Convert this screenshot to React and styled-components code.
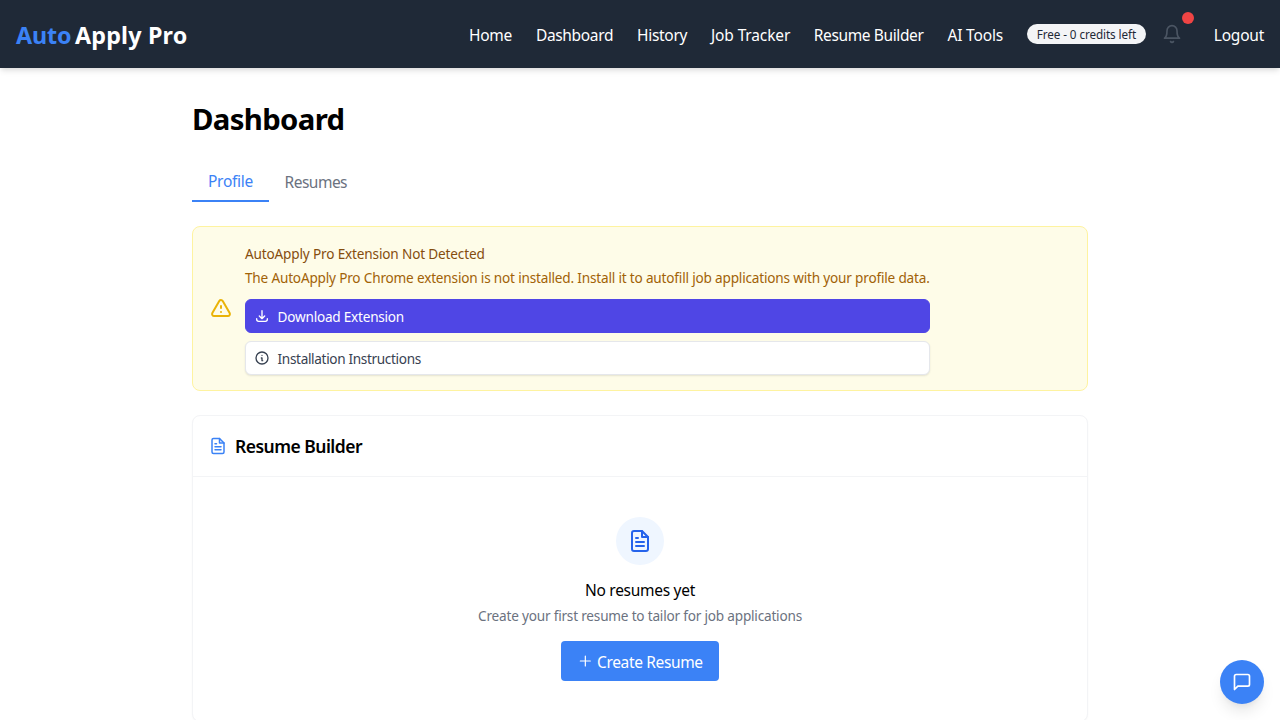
import React from "react";
import styled, { createGlobalStyle, css } from "styled-components";

const GlobalStyle = createGlobalStyle`
  *, *::before, *::after { box-sizing: border-box; }
  html { overflow: hidden; }
  body {
    margin: 0;
    background: #fff;
    color: #000;
    font-family: "Noto Sans", "Open Sans", sans-serif;
  }
  h1, h2, h3, p { margin: 0; }
  button { font: inherit; cursor: pointer; }
  svg { display: block; flex: none; }
`;

const type = (size, line, track = 0, weight = 400) => css`
  font-size: ${size}px;
  line-height: ${line}px;
  letter-spacing: ${track}px;
  font-weight: ${weight};
  white-space: nowrap;
`;

const Header = styled.header`
  display: flex;
  align-items: center;
  justify-content: space-between;
  height: 68px;
  padding: 0 16px;
  background: #1f2937;
  color: #fff;
  box-shadow: 0 4px 6px -1px rgba(0, 0, 0, 0.1), 0 2px 4px -1px rgba(0, 0, 0, 0.06);
`;

const Logo = styled.div`
  display: flex;
  gap: 4px;
  padding-top: 2px;
  ${type(23.3, 32, 0.18, 700)}
`;

const LogoAccent = styled.span`
  width: 55px;
  letter-spacing: -0.15px;
  color: #3b82f6;
`;

const Nav = styled.nav`
  display: flex;
  align-items: center;
  gap: 24px;
`;

const NavLink = styled.a`
  width: ${(p) => p.$width}px;
  padding-top: 2px;
  ${(p) => type(15.5, 24, p.$track)}
`;

const Account = styled.div`
  display: flex;
  align-items: center;
  gap: 8px;
`;

const Credits = styled.span`
  width: 119px;
  height: 20px;
  padding-left: 10px;
  border-radius: 10px;
  background: #f3f4f6;
  color: #1f2937;
  ${type(11.7, 20, -0.09)}
`;

const BellButton = styled.button`
  position: relative;
  padding: 8px;
  border: 0;
  background: none;
  color: #4b5563;
`;

const UnreadDot = styled.span`
  position: absolute;
  top: -4px;
  right: -4px;
  width: 12px;
  height: 12px;
  border-radius: 50%;
  background: #ef4444;
`;

const Main = styled.main`
  width: 896px;
  margin: 0 auto;
  padding: 32px 0;
`;

const PageTitle = styled.h1`
  ${type(29.3, 38, -0.63, 700)}
  height: 36px;
`;

const Tabs = styled.div`
  display: flex;
  align-items: center;
  height: 42px;
  margin: 24px 0;
`;

const Tab = styled.button`
  height: ${(p) => (p.$active ? 42 : 40)}px;
  width: ${(p) => p.$width}px;
  padding: 2px 0 0 ${(p) => (p.$active ? 16 : 15.5)}px;
  border: 0;
  border-bottom: ${(p) => (p.$active ? "2px solid #3b82f6" : "0")};
  background: none;
  text-align: left;
  color: ${(p) => (p.$active ? "#3b82f6" : "#6b7280")};
  && { ${(p) => type(15.5, 24, p.$track)} }
`;

const Alert = styled.section`
  display: flex;
  align-items: center;
  gap: 12px;
  height: 165px;
  padding: 0 16px;
  border: 1px solid #fef3a0;
  border-radius: 8px;
  background: #fefce8;
  color: #eab308;
`;

const AlertBody = styled.div`
  display: flex;
  flex-direction: column;
  width: 685px;
`;

const AlertTitle = styled.h3`
  color: #854d0e;
  ${type(13.6, 24, -0.16)}
`;

const AlertText = styled.p`
  color: #a16207;
  ${type(13.6, 24, -0.185)}
`;

const AlertButton = styled.button`
  display: flex;
  align-items: center;
  gap: 8px;
  height: 34px;
  margin-bottom: ${(p) => (p.$primary ? 8 : 0)}px;
  padding: 0 7.6px;
  border: 1px solid ${(p) => (p.$primary ? "#4f46e5" : "#e5e7eb")};
  border-radius: 6px;
  background: ${(p) => (p.$primary ? "#4f46e5" : "#fff")};
  color: ${(p) => (p.$primary ? "#fff" : "#374151")};
  box-shadow: ${(p) => (p.$primary ? "none" : "0 1px 2px rgba(0, 0, 0, 0.1)")};
`;

const AlertCopy = styled.div`
  height: 56px;
  margin-top: -1px;
  margin-bottom: 1px;
`;

const AlertButtonLabel = styled.span`
  padding-top: 2px;
  ${(p) => type(13.6, 20, p.$track)}
`;

const Card = styled.section`
  margin-top: 24px;
  border: 1px solid #f3f4f6;
  border-radius: 8px;
  background: #fff;
  box-shadow: 0 1px 2px rgba(0, 0, 0, 0.03);
`;

const CardHeader = styled.div`
  display: flex;
  align-items: center;
  gap: 8px;
  height: 61px;
  padding: 0 16px;
  border-bottom: 1px solid #f3f4f6;
  color: #3b82f6;
`;

const CardTitle = styled.h2`
  color: #000;
  ${type(17.5, 28, -0.52, 600)}
`;

const EmptyState = styled.div`
  display: flex;
  flex-direction: column;
  align-items: center;
  padding: 40px 16px;
`;

const EmptyIcon = styled.div`
  display: grid;
  place-items: center;
  width: 48px;
  height: 48px;
  margin-bottom: 13px;
  border-radius: 50%;
  background: #eff6ff;
  color: #2563eb;
`;

const EmptyTitle = styled.h3`
  ${type(15.5, 24, -0.29)}
`;

const EmptyText = styled.p`
  margin: 4px 0 15px;
  color: #6b7280;
  ${type(13.6, 20, -0.2)}
`;

const CreateButton = styled.button`
  display: flex;
  align-items: center;
  gap: 4px;
  width: 158px;
  height: 40px;
  padding: 0 16px;
  border: 0;
  border-radius: 4px;
  background: #3b82f6;
  color: #fff;
`;

const CreateLabel = styled.span`
  padding-top: 2px;
  ${type(15.5, 24, -0.35)}
`;

const ChatButton = styled.button`
  position: fixed;
  right: 16px;
  bottom: 16px;
  display: grid;
  place-items: center;
  width: 44px;
  height: 44px;
  padding: 0;
  border: 0;
  border-radius: 50%;
  background: #3b82f6;
  color: #fff;
  box-shadow: 0 10px 15px -3px rgba(0, 0, 0, 0.1), 0 4px 6px -2px rgba(0, 0, 0, 0.05);
`;

const Icon = ({ size, children }) => (
  <svg
    width={size}
    height={size}
    viewBox="0 0 24 24"
    fill="none"
    stroke="currentColor"
    strokeWidth="2"
    strokeLinecap="round"
    strokeLinejoin="round"
    aria-hidden="true"
  >
    {children}
  </svg>
);

const BellIcon = () => (
  <Icon size={20}>
    <path d="M18 8A6 6 0 0 0 6 8c0 7-3 9-3 9h18s-3-2-3-9" />
    <path d="M13.73 21a2 2 0 0 1-3.46 0" />
  </Icon>
);

const WarningIcon = () => (
  <Icon size={24}>
    <path d="M12 9v2m0 4h.01m-6.938 4h13.856c1.54 0 2.502-1.667 1.732-3L13.732 4c-.77-1.333-2.694-1.333-3.464 0L3.34 16c-.77 1.333.192 3 1.732 3z" />
  </Icon>
);

const DownloadIcon = () => (
  <Icon size={16}>
    <path d="M4 16v1a3 3 0 003 3h10a3 3 0 003-3v-1m-4-4l-4 4m0 0l-4-4m4 4V4" />
  </Icon>
);

const InfoIcon = () => (
  <Icon size={16}>
    <path d="M13 16h-1v-4h-1m1-4h.01M21 12a9 9 0 11-18 0 9 9 0 0118 0z" />
  </Icon>
);

const FileIcon = ({ size }) => (
  <Icon size={size}>
    <path d="M14 2H6a2 2 0 0 0-2 2v16a2 2 0 0 0 2 2h12a2 2 0 0 0 2-2V8z" />
    <path d="M14 2v6h6M16 13H8M16 17H8M10 9H8" />
  </Icon>
);

const PlusIcon = () => (
  <Icon size={16}>
    <path d="M12.5 4.5v15M5 12h15" strokeWidth="1.8" />
  </Icon>
);

const ChatIcon = () => (
  <Icon size={20}>
    <path d="M21 15a2 2 0 0 1-2 2H7l-4 4V5a2 2 0 0 1 2-2h14a2 2 0 0 1 2 2z" />
  </Icon>
);

const links = [
  { label: "Home", width: 43, track: -0.28 },
  { label: "Dashboard", width: 77.1, track: -0.34 },
  { label: "History", width: 50, track: -0.3 },
  { label: "Job Tracker", width: 78.8, track: -0.14 },
  { label: "Resume Builder", width: 109.6, track: -0.38 },
  { label: "AI Tools", width: 55.4, track: -0.17 },
];

export default function App() {
  return (
    <>
      <GlobalStyle />
      <Header>
        <Logo>
          <LogoAccent>Auto</LogoAccent>
          <span>Apply Pro</span>
        </Logo>
        <Nav>
          {links.map((link) => (
            <NavLink key={link.label} $width={link.width} $track={link.track}>
              {link.label}
            </NavLink>
          ))}
          <Account>
            <Credits>Free - 0 credits left</Credits>
            <BellButton aria-label="Notifications">
              <BellIcon />
              <UnreadDot />
            </BellButton>
          </Account>
          <NavLink $width={50.2} $track={-0.22}>Logout</NavLink>
        </Nav>
      </Header>
      <Main>
        <PageTitle>Dashboard</PageTitle>
        <Tabs>
          <Tab $active $width={77} $track={-0.27}>Profile</Tab>
          <Tab $width={95} $track={-0.5}>Resumes</Tab>
        </Tabs>
        <Alert>
          <WarningIcon />
          <AlertBody>
            <AlertCopy>
              <AlertTitle>AutoApply Pro Extension Not Detected</AlertTitle>
              <AlertText>
                The AutoApply Pro Chrome extension is not installed. Install it to autofill job
                applications with your profile data.
              </AlertText>
            </AlertCopy>
            <AlertButton $primary>
              <DownloadIcon />
              <AlertButtonLabel $track={-0.23}>Download Extension</AlertButtonLabel>
            </AlertButton>
            <AlertButton>
              <InfoIcon />
              <AlertButtonLabel $track={-0.34}>Installation Instructions</AlertButtonLabel>
            </AlertButton>
          </AlertBody>
        </Alert>
        <Card>
          <CardHeader>
            <FileIcon size={18} />
            <CardTitle>Resume Builder</CardTitle>
          </CardHeader>
          <EmptyState>
            <EmptyIcon>
              <FileIcon size={24} />
            </EmptyIcon>
            <EmptyTitle>No resumes yet</EmptyTitle>
            <EmptyText>Create your first resume to tailor for job applications</EmptyText>
            <CreateButton>
              <PlusIcon />
              <CreateLabel>Create Resume</CreateLabel>
            </CreateButton>
          </EmptyState>
        </Card>
      </Main>
      <ChatButton aria-label="Open chat">
        <ChatIcon />
      </ChatButton>
    </>
  );
}
